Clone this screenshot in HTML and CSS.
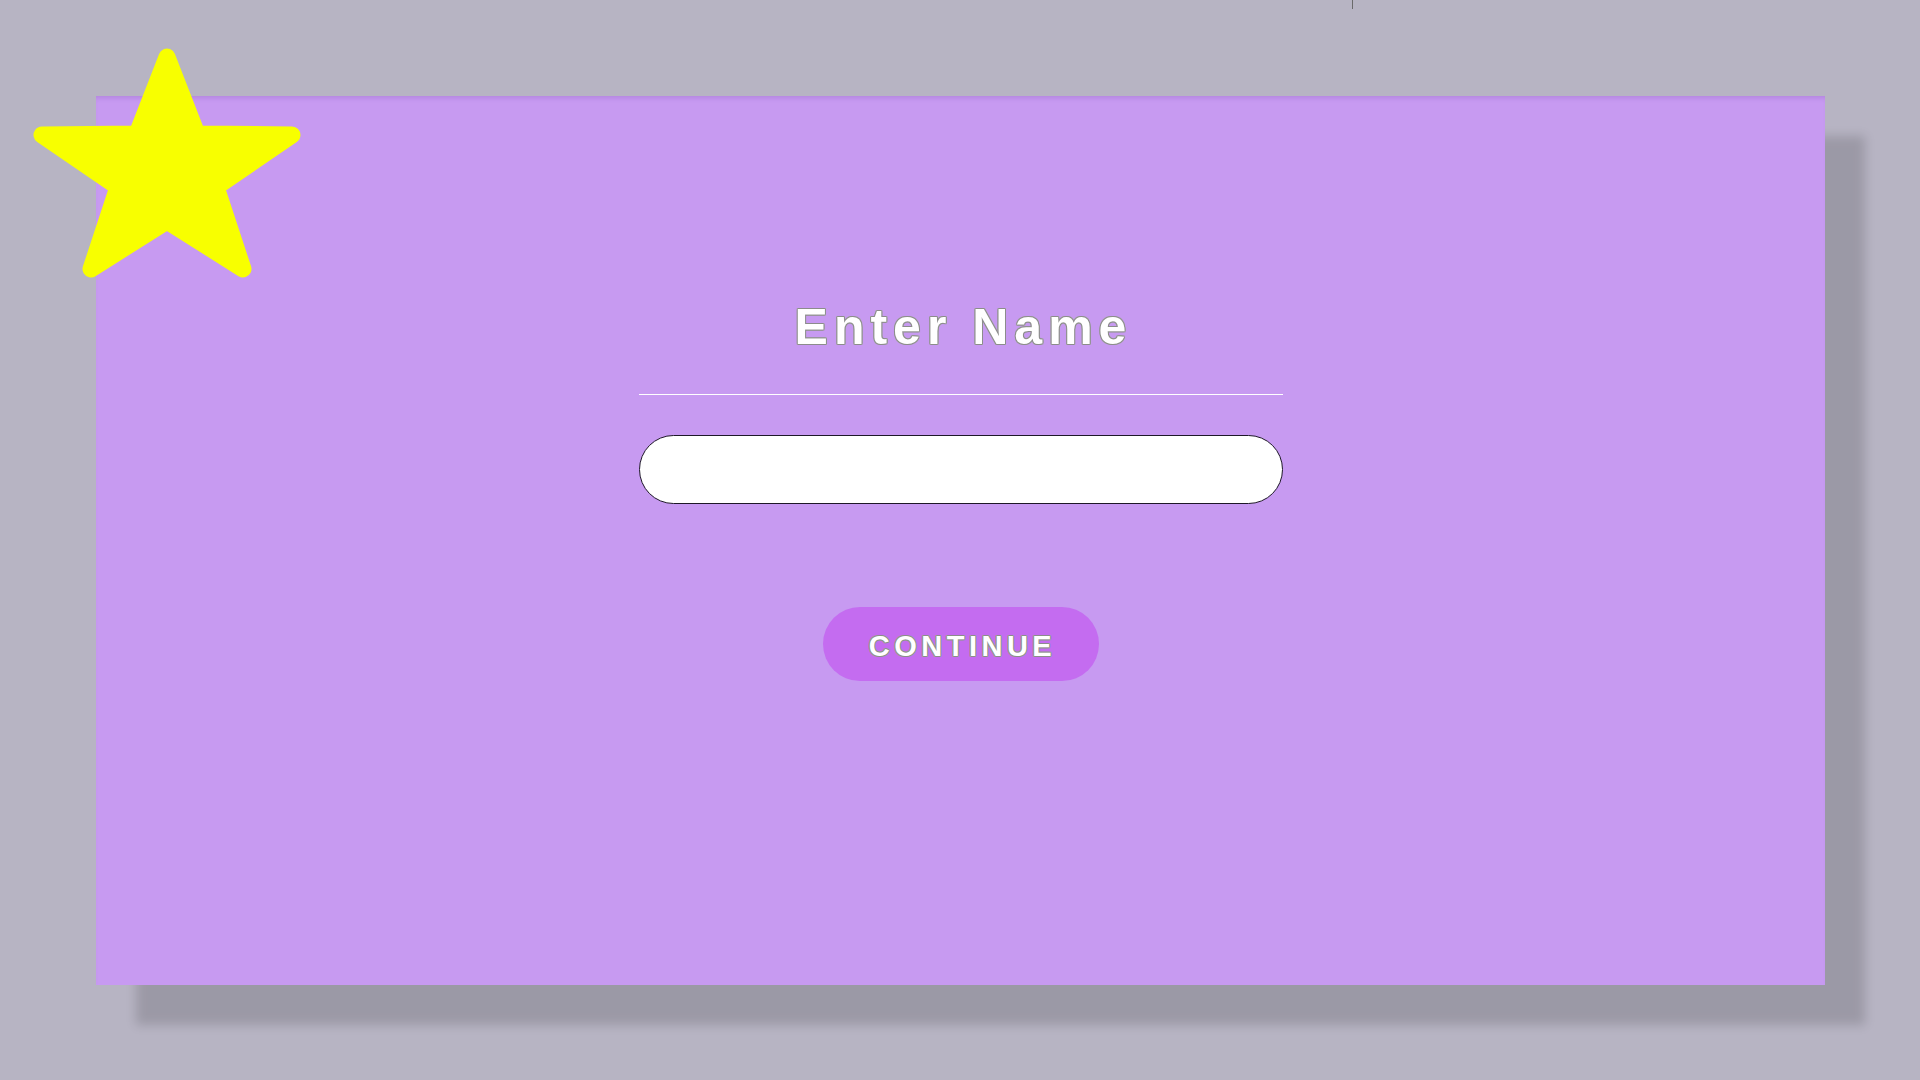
FILE: index.html
```html
<!DOCTYPE html>
<html lang="en">
<head>
<meta charset="utf-8">
<title>Enter Name</title>
<link rel="stylesheet" href="styles.css">
</head>
<body>
<div class="tick"></div>
<main class="card">
  <h1 class="title">Enter Name</h1>
  <div class="rule"></div>
  <input class="name-input" type="text" aria-label="Name">
  <button class="continue">CONTINUE</button>
</main>
<svg class="star" width="334" height="300" viewBox="0 0 334 300" aria-hidden="true">
  <polygon points="167,57 197,134 292,135 216,187 243,269 167,221 91,269 118,187 42,135 137,134" fill="#f8ff00" stroke="#f8ff00" stroke-width="17" stroke-linejoin="round"/>
</svg>
</body>
</html>
```
FILE: styles.css
```css
html, body {
  margin: 0;
  padding: 0;
}
body {
  width: 1920px;
  height: 1080px;
  background: #b7b4c3;
  overflow: hidden;
  position: relative;
  font-family: "Liberation Sans", Arial, sans-serif;
}
.tick {
  position: absolute;
  left: 1352px;
  top: 0;
  width: 1px;
  height: 9px;
  background: #6a6a6a;
}
.card {
  box-sizing: border-box;
  margin: 96px 0 0 96px;
  width: 1729px;
  height: 889px;
  background: #c79af1;
  box-shadow: 40px 40px 10px rgba(0, 0, 0, 0.15), inset 0 5px 5px -3px rgba(90, 40, 140, 0.18);
  display: flex;
  flex-direction: column;
  align-items: center;
  padding-top: 201px;
}
.title {
  margin: 0;
  font-size: 50px;
  line-height: 60px;
  font-weight: 700;
  letter-spacing: 6px;
  padding-left: 6px;
  color: #ffffff;
  text-shadow:
    1px 0 0 #8c8c8c, -1px 0 0 #8c8c8c, 0 1px 0 #8c8c8c, 0 -1px 0 #8c8c8c,
    1px 1px 0 #a0a0a0, -1px -1px 0 #a0a0a0, 1px -1px 0 #a0a0a0, -1px 1px 0 #a0a0a0;
}
.rule {
  margin-top: 37px;
  width: 644px;
  height: 1px;
  background: #ffffff;
}
.name-input {
  box-sizing: border-box;
  margin-top: 40px;
  width: 644px;
  height: 69px;
  border: 1px solid #1e1828;
  border-radius: 35px;
  background: #ffffff;
  outline: none;
  padding: 0 30px;
  font-size: 24px;
  font-family: inherit;
}
.continue {
  box-sizing: border-box;
  margin-top: 103px;
  width: 276px;
  height: 74px;
  border: none;
  border-radius: 37px;
  background: #c46cf0;
  display: flex;
  align-items: center;
  justify-content: center;
  padding: 4px 0 0 4px;
  font-family: inherit;
  font-size: 29px;
  font-weight: 700;
  letter-spacing: 4.5px;
  color: #ffffff;
  text-shadow:
    1px 0 0 #8c8c8c, -1px 0 0 #8c8c8c, 0 1px 0 #8c8c8c, 0 -1px 0 #8c8c8c,
    1px 1px 0 #a0a0a0, -1px -1px 0 #a0a0a0, 1px -1px 0 #a0a0a0, -1px 1px 0 #a0a0a0;
  cursor: pointer;
}
.star {
  position: absolute;
  left: 0;
  top: 0;
}
```
